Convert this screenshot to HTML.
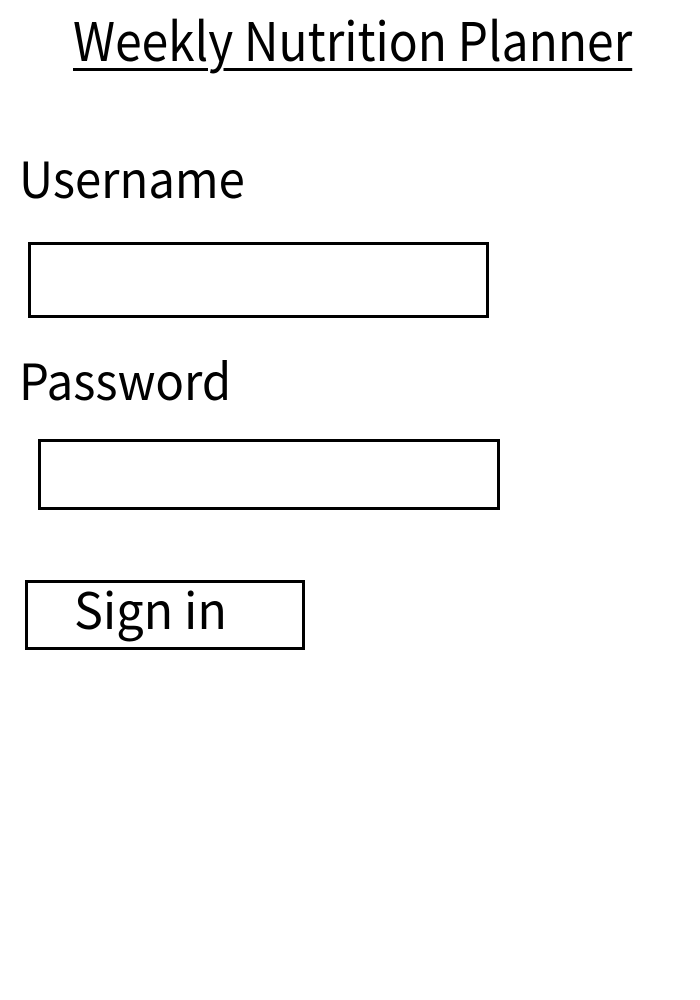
<!DOCTYPE html>
<html><head><style>
body{margin:0;width:700px;height:1000px;background:#fff;position:relative;font-family:"Noto Sans CJK JP","Liberation Sans",sans-serif;color:#000;overflow:hidden}
.t{position:absolute;line-height:1;white-space:nowrap;transform-origin:0 0}
.b{position:absolute;border:3px solid #000;box-sizing:border-box}
</style></head><body>
<div class="t" style="left:73px;top:13px;font-size:53px;text-decoration:underline;text-decoration-thickness:3px;text-underline-offset:7px;transform:scaleX(0.904)">Weekly Nutrition Planner</div>
<div class="t" style="left:19px;top:152px;font-size:50px;transform:scaleX(0.945)">Username</div>
<div class="b" style="left:28px;top:242px;width:461px;height:76px"></div>
<div class="t" style="left:19px;top:354px;font-size:50px;transform:scaleX(0.946)">Password</div>
<div class="b" style="left:38px;top:439px;width:462px;height:71px"></div>
<div class="b" style="left:25px;top:580px;width:280px;height:70px"></div>
<div class="t" style="left:74px;top:583px;font-size:50px;transform:scaleX(0.97)">Sign in</div>
</body></html>
